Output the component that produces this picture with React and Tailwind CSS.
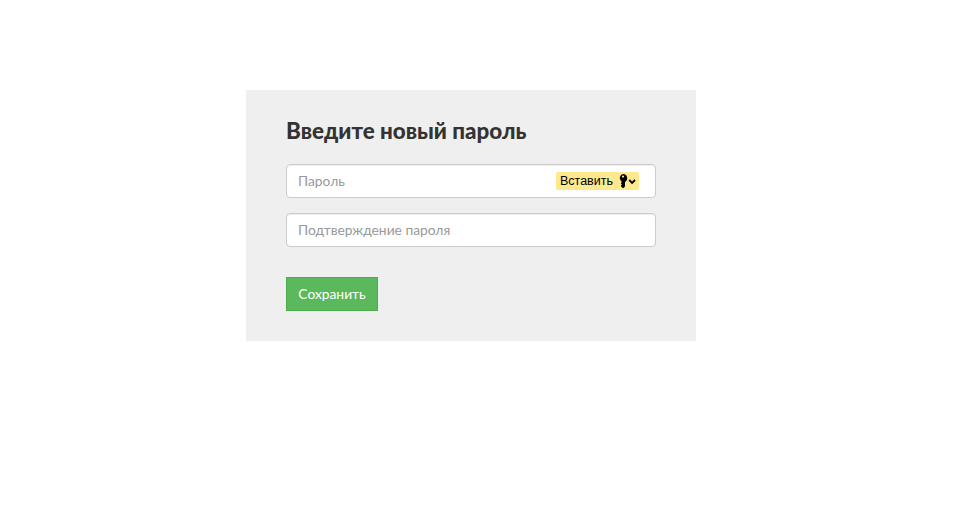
function KeyIcon() {
  return (
    <svg width="20" height="16" viewBox="0 0 20 16" className="block" aria-hidden="true">
      {/* key */}
      <path
        fill="#000"
        fillRule="evenodd"
        d="M5 1a4.2 4.2 0 0 1 2 7.9V13.6L5.2 15.2 3 13.4v-1.1l1-.8-1-.8v-1l1-.8-1-.8A4.2 4.2 0 0 1 5 1zm0 1.5a1.1 1.1 0 1 0 0 2.2 1.1 1.1 0 0 0 0-2.2z"
      />
      {/* chevron */}
      <path d="M11.2 7l2.9 2.9L17 7" fill="none" stroke="#000" strokeWidth="1.8" />
    </svg>
  );
}

export default function App() {
  return (
    <div className="min-h-[520px] bg-white pt-[90px] font-['Lato','Noto_Sans',sans-serif]">
      <div className="ml-[246px] w-[450px] h-[251px] bg-[#efefef] px-10 pt-[27px]">
        <h1 className="text-[22.4px] leading-[28px] font-black text-[#333]">Введите новый пароль</h1>

        <div className="mt-[19px] flex h-[34px] items-center justify-between rounded-[4px] border border-[#ccc] bg-white pl-[11px] pr-4 shadow-[inset_0_1px_1px_rgba(0,0,0,0.075)]">
          <span className="text-[13.8px] text-[#999]">Пароль</span>
          <span className="flex h-[18px] w-[83px] items-center gap-[5px] rounded-[2px] bg-[#ffe98f] pl-1 font-['Liberation_Sans',sans-serif] text-[12.5px] text-black">
            Вставить
            <KeyIcon />
          </span>
        </div>

        <div className="mt-[15px] flex h-[34px] items-center rounded-[4px] border border-[#ccc] bg-white pl-[11px] pr-3 shadow-[inset_0_1px_1px_rgba(0,0,0,0.075)]">
          <span className="text-[13.8px] text-[#999]">Подтверждение пароля</span>
        </div>

        <button className="mt-[30px] block h-[34px] w-[92px] border border-[#4cae4c] bg-[#5cb85c] text-[13.8px] text-white">
          Сохранить
        </button>
      </div>
    </div>
  );
}
